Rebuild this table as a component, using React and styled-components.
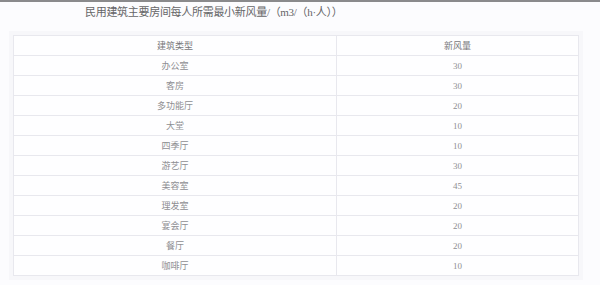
import React from 'react';
import styled, { createGlobalStyle } from 'styled-components';

const GlobalStyle = createGlobalStyle`
  html, body {
    margin: 0;
    padding: 0;
    background: #fcfcfe;
  }
`;

const Page = styled.div`
  width: 600px;
  height: 285px;
  box-sizing: border-box;
  border-top: 2px solid #8a8a8c;
  padding: 0 22px 0 13px;
  font-family: "Liberation Serif", "Noto Sans CJK SC", serif;
  overflow: hidden;
`;

const Title = styled.div`
  height: 20px;
  line-height: 20px;
  padding-left: 72px;
  font-size: 11px;
  color: #656567;
  letter-spacing: -0.3px;
  margin-bottom: 13px;
`;

const Table = styled.table`
  width: 566px;
  border-collapse: collapse;
  border: 1px solid #e4e4ea;
  box-shadow: 0 0 0 4px #f7f7fa;
  background: #fefeff;
`;

const Cell = styled.td`
  height: 19px;
  padding: 0;
  border: 1px solid #e8e8ee;
  text-align: center;
  font-size: 9px;
  color: ${(p) => (p.$head ? '#77777a' : '#8e8e92')};
  width: ${(p) => (p.$wide ? '322px' : 'auto')};
`;

const rows = [
  ['办公室', 30],
  ['客房', 30],
  ['多功能厅', 20],
  ['大堂', 10],
  ['四季厅', 10],
  ['游艺厅', 30],
  ['美容室', 45],
  ['理发室', 20],
  ['宴会厅', 20],
  ['餐厅', 20],
  ['咖啡厅', 10],
];

export default function App() {
  return (
    <>
      <GlobalStyle />
      <Page>
        <Title>民用建筑主要房间每人所需最小新风量/（m3/（h·人））</Title>
        <Table>
          <tbody>
            <tr>
              <Cell $head $wide>建筑类型</Cell>
              <Cell $head>新风量</Cell>
            </tr>
            {rows.map(([name, value]) => (
              <tr key={name}>
                <Cell $wide>{name}</Cell>
                <Cell>{value}</Cell>
              </tr>
            ))}
          </tbody>
        </Table>
      </Page>
    </>
  );
}
